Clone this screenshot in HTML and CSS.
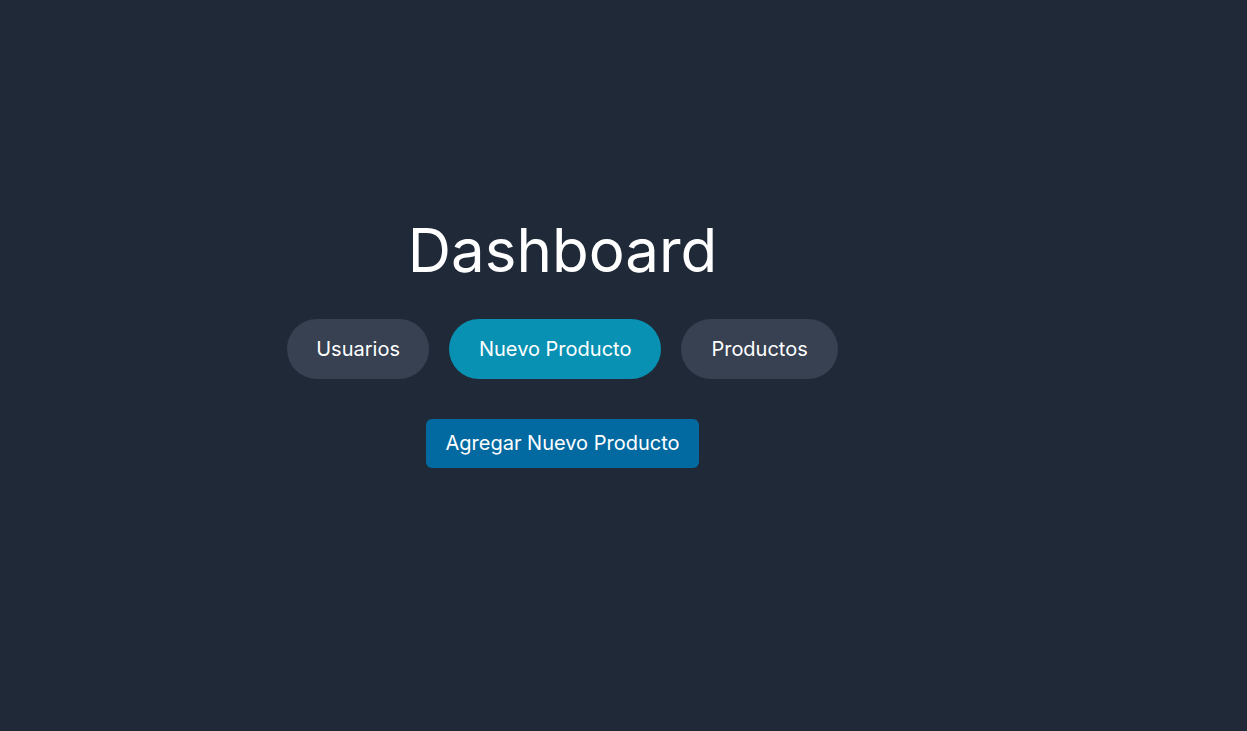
FILE: index.html
```html
<!DOCTYPE html>
<html lang="es">
<head>
<meta charset="utf-8">
<title>Dashboard</title>
<link rel="stylesheet" href="styles.css">
</head>
<body>
<main class="page">
  <div class="content">
    <h1 class="title">Dashboard</h1>
    <nav class="tabs">
      <button class="tab">Usuarios</button>
      <button class="tab tab-active">Nuevo Producto</button>
      <button class="tab">Productos</button>
    </nav>
    <button class="add-btn">Agregar Nuevo Producto</button>
  </div>
</main>
</body>
</html>
```
FILE: styles.css
```css
* { box-sizing: border-box; }
html, body {
  margin: 0;
  padding: 0;
  background: #1f2937;
  height: 100%;
}
body {
  font-family: Inter, "Noto Sans", sans-serif;
  color: #ffffff;
}
.page {
  width: 1125px;
  padding-top: 220px;
}
.content {
  display: flex;
  flex-direction: column;
  align-items: center;
}
.title {
  margin: 0;
  font-size: 60px;
  line-height: 60px;
  font-weight: 400;
}
.tabs {
  display: flex;
  gap: 20px;
  margin-top: 39px;
}
.tab {
  font-family: inherit;
  font-size: 20px;
  line-height: 28px;
  color: #ffffff;
  background: #374151;
  border: none;
  border-radius: 30px;
  padding: 16px 30px;
  cursor: pointer;
}
.tab:first-child {
  padding: 16px 29px;
}
.tab-active {
  background: #0891b2;
}
.add-btn {
  margin-top: 40px;
  font-family: inherit;
  font-size: 20px;
  line-height: 28px;
  color: #ffffff;
  background: #0369a1;
  border: none;
  border-radius: 6px;
  padding: 10px 19px 11px;
  height: 49px;
  cursor: pointer;
}
```
